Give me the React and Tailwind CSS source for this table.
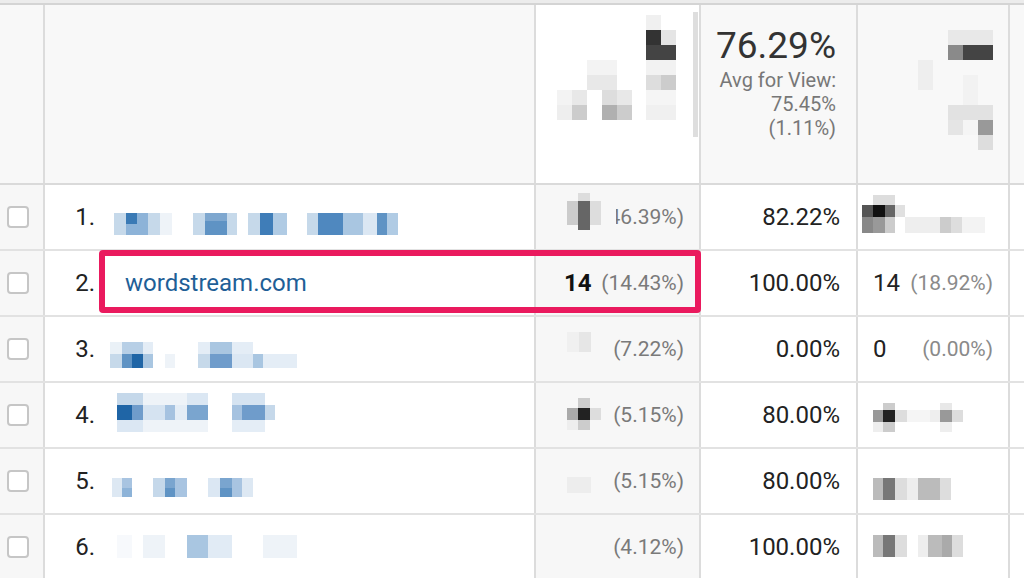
import clsx from 'clsx';

// --- Pixelated (redacted) blocks ---

const Mosaic = ({ w, h, cells, className }) => (
  <svg width={w} height={h} viewBox={`0 0 ${w} ${h}`} className={clsx('block shrink-0', className)}>
    {cells.map(([x, y, cw, ch, c], i) => (
      <rect key={i} x={x} y={y} width={cw} height={ch} fill={c} />
    ))}
  </svg>
);

const HEAD_SESSIONS = [
  [89, 0, 15, 15, '#f0f0f0'],
  [89, 15, 15, 15, '#333333'],
  [104, 15, 15, 15, '#e5e5e5'],
  [89, 30, 30, 15, '#444444'],
  [89, 45, 30, 15, '#f2f2f2'],
  [89, 60, 15, 15, '#dddddd'],
  [104, 60, 15, 15, '#cccccc'],
  [89, 75, 30, 15, '#f5f5f5'],
  [89, 90, 30, 15, '#f0f0f0'],
  [30, 45, 30, 15, '#f3f3f3'],
  [30, 60, 30, 15, '#e8e8e8'],
  [0, 75, 15, 15, '#f3f3f3'],
  [15, 75, 15, 15, '#e8e8e8'],
  [45, 75, 15, 15, '#dddddd'],
  [60, 75, 15, 15, '#e8e8e8'],
  [0, 90, 15, 15, '#eeeeee'],
  [15, 90, 15, 15, '#cccccc'],
  [45, 90, 15, 15, '#b0b0b0'],
  [60, 90, 15, 15, '#cccccc'],
];

const HEAD_NEW = [
  [30, 0, 45, 15, '#e8e8e8'],
  [30, 15, 15, 15, '#8a8a8a'],
  [45, 15, 30, 15, '#444444'],
  [0, 30, 15, 30, '#eeeeee'],
  [45, 45, 15, 30, '#f2f2f2'],
  [30, 75, 45, 15, '#e2e2e2'],
  [30, 90, 15, 15, '#e5e5e5'],
  [45, 90, 15, 15, '#f5f5f5'],
  [60, 90, 15, 15, '#999999'],
  [60, 105, 15, 15, '#dddddd'],
];

const rows = [
  {
    num: '1.',
    name: {
      w: 284, h: 22, top: 'mt-[28px]', ml: 'ml-[19px]',
      cells: [
        [0, 0, 12, 22, '#c6d9ea'], [12, 0, 11, 11, '#3a7ab5'], [12, 11, 11, 11, '#8db3d8'],
        [23, 0, 11, 22, '#8db3d8'], [34, 0, 12, 22, '#c6d9ea'], [46, 0, 12, 22, '#eef3f8'],
        [79, 0, 12, 22, '#c6d9ea'], [91, 0, 22, 22, '#5f93c4'], [91, 0, 22, 8, '#7ea7cf'],
        [113, 0, 10, 22, '#c6d9ea'], [134, 0, 12, 22, '#c6d9ea'], [146, 0, 13, 22, '#3f7db8'],
        [159, 0, 14, 22, '#b0cbe4'], [193, 0, 11, 22, '#c6d9ea'], [204, 0, 25, 22, '#4f88bf'],
        [229, 0, 20, 22, '#a9c6e1'], [249, 0, 14, 22, '#dbe7f3'], [263, 0, 10, 22, '#5f93c4'],
        [273, 0, 11, 22, '#b0cbe4'],
      ],
    },
    sessions: { pct: '(46.39%)', cover: true },
    bounce: '82.22%',
    conv: {
      w: 123, h: 38, top: 'mt-[10px]', ml: 'ml-[4px]',
      cells: [
        [11, 0, 22, 10, '#dddddd'], [0, 10, 11, 12, '#555555'], [11, 10, 12, 12, '#111111'],
        [23, 10, 10, 12, '#666666'], [33, 10, 10, 12, '#e0e0e0'], [0, 22, 11, 16, '#888888'],
        [11, 22, 12, 16, '#999999'], [23, 22, 10, 16, '#cccccc'], [43, 22, 35, 16, '#eeeeee'],
        [78, 22, 11, 16, '#cccccc'], [89, 22, 11, 16, '#dddddd'], [100, 22, 23, 16, '#f3f3f3'],
      ],
    },
  },
  {
    num: '2.',
    link: 'wordstream.com',
    sessions: { value: '14', pct: '(14.43%)' },
    bounce: '100.00%',
    conv: { value: '14', pct: '(18.92%)' },
  },
  {
    num: '3.',
    name: {
      w: 187, h: 26, top: 'mt-[25px]', ml: 'ml-[15px]',
      cells: [
        [0, 0, 12, 12, '#eaf1f7'], [12, 0, 21, 12, '#b7cfe6'], [33, 0, 10, 12, '#e4edf6'],
        [88, 0, 12, 12, '#e4edf6'], [100, 0, 22, 12, '#a9c6e1'], [122, 0, 21, 12, '#e4edf6'],
        [0, 12, 12, 14, '#c6d9ea'], [12, 12, 10, 14, '#5f93c4'], [22, 12, 11, 14, '#1f65a6'],
        [33, 12, 10, 14, '#a9c6e1'], [55, 12, 10, 14, '#eef3f8'], [88, 12, 12, 14, '#c6d9ea'],
        [100, 12, 22, 14, '#6f9ccb'], [122, 12, 21, 14, '#dbe7f3'], [143, 12, 10, 14, '#a9c6e1'],
        [153, 12, 34, 14, '#e4edf6'],
      ],
    },
    sessions: {
      pct: '(7.22%)',
      mosaic: { w: 24, h: 20, top: 'mt-[15px]', cells: [[0, 0, 12, 20, '#f0f0f0'], [12, 0, 12, 20, '#e6e6e6']] },
    },
    bounce: '0.00%',
    conv: { value: '0', pct: '(0.00%)' },
  },
  {
    num: '4.',
    name: {
      w: 166, h: 39, top: 'mt-[10px]', ml: 'ml-[22px]',
      cells: [
        [0, 0, 26, 12, '#c5d8ea'], [26, 0, 44, 12, '#eef3f8'], [70, 0, 21, 12, '#dbe7f3'],
        [115, 0, 33, 12, '#d5e3f1'], [0, 12, 15, 15, '#1f65a6'], [15, 12, 11, 15, '#6f9ccb'],
        [26, 12, 22, 15, '#d5e3f1'], [48, 12, 10, 15, '#a5c2e0'], [58, 12, 12, 15, '#e4edf6'],
        [70, 12, 21, 15, '#7aa5cf'], [115, 12, 10, 15, '#a5c2e0'], [125, 12, 23, 15, '#6f9ccb'],
        [148, 12, 10, 15, '#c5d8ea'], [0, 27, 26, 12, '#dbe7f3'], [26, 27, 65, 12, '#eef3f8'],
        [115, 27, 33, 12, '#e4edf6'],
      ],
    },
    sessions: {
      pct: '(5.15%)',
      mosaic: {
        w: 34, h: 32, top: 'mt-[15px]',
        cells: [
          [11, 0, 12, 10, '#cccccc'], [0, 10, 11, 12, '#aaaaaa'], [11, 10, 12, 12, '#222222'],
          [23, 10, 11, 12, '#dddddd'], [0, 22, 11, 10, '#eeeeee'], [11, 22, 12, 10, '#cccccc'],
        ],
      },
    },
    bounce: '80.00%',
    conv: {
      w: 90, h: 29, top: 'mt-[20px]', ml: 'ml-[15px]',
      cells: [
        [10, 0, 12, 7, '#cccccc'], [67, 0, 12, 7, '#e8e8e8'], [0, 7, 10, 12, '#999999'],
        [10, 7, 12, 12, '#222222'], [22, 7, 12, 12, '#dddddd'], [34, 7, 23, 12, '#f5f5f5'],
        [57, 7, 10, 12, '#eeeeee'], [67, 7, 12, 12, '#999999'], [79, 7, 11, 12, '#dddddd'],
        [0, 19, 10, 10, '#eeeeee'], [10, 19, 12, 10, '#cccccc'], [67, 19, 12, 10, '#eeeeee'],
      ],
    },
  },
  {
    num: '5.',
    name: {
      w: 141, h: 19, top: 'mt-[29px]', ml: 'ml-[17px]',
      cells: [
        [0, 0, 10, 19, '#dde8f3'], [10, 0, 10, 10, '#a8c4e1'], [10, 10, 10, 9, '#8db3d8'],
        [41, 0, 12, 19, '#c5d8ea'], [53, 0, 10, 10, '#7aa5cf'], [53, 10, 10, 9, '#5f93c4'],
        [63, 0, 12, 19, '#a8c4e1'], [96, 0, 12, 19, '#dbe7f3'], [108, 0, 12, 10, '#7aa5cf'],
        [108, 10, 12, 9, '#5f93c4'], [120, 0, 10, 19, '#a8c4e1'], [130, 0, 11, 19, '#dde8f3'],
      ],
    },
    sessions: {
      pct: '(5.15%)',
      mosaic: { w: 24, h: 16, top: 'mt-[28px]', cells: [[0, 0, 24, 16, '#ededed']] },
    },
    bounce: '80.00%',
    conv: {
      w: 90, h: 22, top: 'mt-[29px]', ml: 'ml-[15px]',
      cells: [
        [0, 0, 10, 22, '#bbbbbb'], [10, 0, 12, 22, '#777777'], [22, 0, 12, 22, '#dddddd'],
        [34, 0, 11, 22, '#eeeeee'], [45, 0, 22, 22, '#bbbbbb'], [67, 0, 11, 22, '#dddddd'],
      ],
    },
  },
  {
    num: '6.',
    name: {
      w: 180, h: 23, top: 'mt-[20px]', ml: 'ml-[22px]',
      cells: [
        [0, 0, 15, 23, '#f7f9fc'], [26, 0, 22, 23, '#eef3f8'], [70, 0, 21, 23, '#a9c6e1'],
        [91, 0, 24, 23, '#e1ebf5'], [146, 0, 34, 23, '#eef3f8'],
      ],
    },
    sessions: { pct: '(4.12%)' },
    bounce: '100.00%',
    conv: {
      w: 90, h: 22, top: 'mt-[20px]', ml: 'ml-[15px]',
      cells: [
        [0, 0, 10, 22, '#bbbbbb'], [10, 0, 12, 22, '#777777'], [22, 0, 12, 22, '#dddddd'],
        [45, 0, 10, 22, '#eeeeee'], [55, 0, 14, 22, '#bbbbbb'], [69, 0, 10, 22, '#aaaaaa'],
        [79, 0, 11, 22, '#dddddd'],
      ],
    },
  },
];

const GRID = 'grid grid-cols-[45px_491px_165px_157px_152px_1fr]';
const CELL = 'border-r-2 border-[#dcdcdc]';
const PCT = 'text-[21px] text-[#7a7a7a]';

const Checkbox = () => (
  <div className="w-[22px] h-[22px] rounded-[4px] border-2 border-[#c6c6c6] bg-white" />
);

const SessionsCell = ({ data }) => {
  if (data.cover) {
    return (
      <div className={clsx(CELL, 'relative flex items-center justify-end pr-[15px] bg-[#f7f7f7]')}>
        <span className={PCT}>{data.pct}</span>
        <div className="absolute left-[31px] top-0 h-full w-[49px] bg-[#f7f7f7] pt-[8px]">
          <Mosaic
            w={34}
            h={37}
            cells={[
              [0, 8, 11, 24, '#cccccc'],
              [11, 0, 12, 8, '#dddddd'],
              [11, 8, 12, 29, '#666666'],
              [23, 8, 11, 24, '#dddddd'],
            ]}
          />
        </div>
      </div>
    );
  }

  return (
    <div className={clsx(CELL, 'flex items-center pl-[28px] pr-[15px] bg-[#f7f7f7]')}>
      {data.value && <span className="font-bold text-[#111]">{data.value}</span>}
      {data.mosaic && (
        <Mosaic {...data.mosaic} className={clsx('self-start ml-[3px]', data.mosaic.top)} />
      )}
      <span className={clsx('ml-auto', PCT)}>{data.pct}</span>
    </div>
  );
};

const Row = ({ row }) => (
  <div className={clsx(GRID, 'h-[66px] border-b-2 border-[#e2e2e2]')}>
    <div className={clsx(CELL, 'flex items-center pl-[7px] bg-[#f7f7f7]')}>
      <Checkbox />
    </div>
    <div className={clsx(CELL, 'flex items-center bg-white')}>
      <span className="w-[50px] shrink-0 text-right text-[#222]">{row.num}</span>
      {row.link && <span className="ml-[30px] text-[#1f5f97]">{row.link}</span>}
      {row.name && <Mosaic {...row.name} className={clsx('self-start', row.name.top, row.name.ml)} />}
    </div>
    <SessionsCell data={row.sessions} />
    <div className={clsx(CELL, 'flex items-center justify-end pr-[16px] bg-white text-[#222]')}>
      {row.bounce}
    </div>
    <div className={clsx(CELL, 'flex items-center bg-white')}>
      {row.conv.cells ? (
        <Mosaic {...row.conv} className={clsx('self-start', row.conv.top, row.conv.ml)} />
      ) : (
        <div className="flex w-full items-center justify-between pl-[15px] pr-[15px]">
          <span className="text-[#222]">{row.conv.value}</span>
          <span className={clsx(PCT, 'text-[#8a8a8a]')}>{row.conv.pct}</span>
        </div>
      )}
    </div>
    <div className="bg-white" />
  </div>
);

const App = () => {
  return (
    <div className="relative w-[1024px] h-[578px] overflow-hidden bg-white font-[Roboto,sans-serif] text-[24px] leading-none">
      <div className="h-[3px] bg-[#ececec]" />
      <div className="border-t-2 border-[#d4d4d4]">
        {/* header */}
        <div className={clsx(GRID, 'h-[180px] border-b-2 border-[#dadada]')}>
          <div className={clsx(CELL, 'bg-[#f8f8f8]')} />
          <div className={clsx(CELL, 'bg-[#f8f8f8]')} />
          <div className={clsx(CELL, 'flex items-start bg-white')}>
            <Mosaic w={119} h={105} cells={HEAD_SESSIONS} className="ml-[21px] mt-[10px]" />
            <div className="ml-auto mr-[1px] mt-[7px] w-[5px] h-[125px] bg-[#dedede]" />
          </div>
          <div className={clsx(CELL, 'bg-[#f8f8f8] pt-[19px] pr-[20px] text-right')}>
            <div className="text-[37px] leading-[44px] text-[#333]">76.29%</div>
            <div className="text-[20px] leading-[24px] text-[#777]">
              <div>Avg for View:</div>
              <div>75.45%</div>
              <div>(1.11%)</div>
            </div>
          </div>
          <div className={clsx(CELL, 'bg-[#f8f8f8]')}>
            <Mosaic w={75} h={120} cells={HEAD_NEW} className="ml-[60px] mt-[25px]" />
          </div>
          <div className="bg-[#f8f8f8]" />
        </div>

        {rows.map(row => (
          <Row key={row.num} row={row} />
        ))}
      </div>

      {/* highlight box */}
      <div className="absolute left-[99px] top-[250px] w-[602px] h-[63px] rounded-[4px] border-[6px] border-[#ea1a5e]" />
    </div>
  );
};

export default App;
